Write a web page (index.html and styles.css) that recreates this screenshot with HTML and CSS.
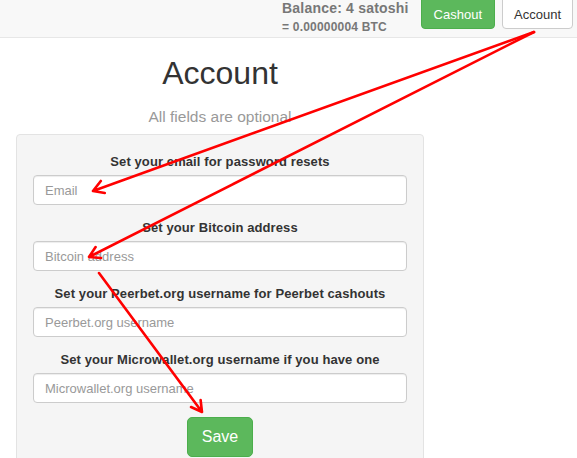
FILE: index.html
```html
<!DOCTYPE html>
<html>
<head>
<meta charset="utf-8">
<link rel="stylesheet" href="styles.css">
</head>
<body>
<header class="navbar">
  <div class="balance">
    <div class="balance-main">Balance: 4 satoshi</div>
    <div class="balance-btc">= 0.00000004 BTC</div>
  </div>
  <button class="nav-btn btn-green">Cashout</button>
  <button class="nav-btn btn-white">Account</button>
</header>
<main class="content">
  <h1 class="title">Account</h1>
  <p class="subtitle">All fields are optional</p>
  <form class="well">
    <div class="group">
      <label class="label">Set your email for password resets</label>
      <input class="field" type="text" placeholder="Email">
    </div>
    <div class="group">
      <label class="label">Set your Bitcoin address</label>
      <input class="field" type="text" placeholder="Bitcoin address">
    </div>
    <div class="group">
      <label class="label">Set your Peerbet.org username for Peerbet cashouts</label>
      <input class="field" type="text" placeholder="Peerbet.org username">
    </div>
    <div class="group">
      <label class="label">Set your Microwallet.org username if you have one</label>
      <input class="field" type="text" placeholder="Microwallet.org username">
    </div>
    <div class="actions">
      <button class="save" type="button">Save</button>
    </div>
  </form>
</main>
<svg class="arrows" width="577" height="458" viewBox="0 0 577 458">
  <g fill="none" stroke="#ff0000" stroke-width="2.6" stroke-linecap="round" stroke-linejoin="round">
    <path d="M534 32 L93 191 M104.8 193 L93 191 L100.8 181"/>
    <path d="M534 32 L89 257 M101 258 L89 257 L95.6 247"/>
    <path d="M99 273 L202 412 M200.6 400 L202 412 L191 407"/>
  </g>
</svg>
</body>
</html>
```

FILE: styles.css
```css
html, body {
  margin: 0;
  padding: 0;
  background: #fff;
  font-family: "Liberation Sans", Arial, sans-serif;
  color: #333;
}

body {
  position: relative;
  width: 577px;
  height: 458px;
  overflow: hidden;
}

.navbar {
  height: 37px;
  background: #f8f8f8;
  border-bottom: 1px solid #e7e7e7;
  display: flex;
  justify-content: flex-end;
  align-items: flex-start;
  padding-right: 4px;
}

.balance {
  color: #777;
  font-weight: bold;
  margin-right: 12px;
  letter-spacing: 0.2px;
}

.balance-main {
  font-size: 14px;
  line-height: 16px;
}

.balance-btc {
  font-size: 12px;
  line-height: 16px;
  margin-top: 3px;
}

.nav-btn {
  font-family: "Liberation Sans", Arial, sans-serif;
  font-size: 13px;
  height: 33px;
  margin-top: -4px;
  padding: 4px 12px 0;
  border-radius: 4px;
  border: 1px solid;
  line-height: 16px;
}

.btn-green {
  background: #5cb85c;
  border-color: #4cae4c;
  color: #fff;
  margin-right: 7px;
}

.btn-white {
  background: #fff;
  border-color: #ccc;
  color: #333;
  padding: 4px 11px 0;
}

.content {
  width: 408px;
  padding-left: 16px;
}

.title {
  margin: 18px 0 0;
  font-size: 32px;
  font-weight: normal;
  line-height: 35px;
  text-align: center;
  color: #333;
}

.subtitle {
  margin: 16px 0 0;
  font-size: 15.5px;
  line-height: 20px;
  text-align: center;
  color: #999;
}

.well {
  margin-top: 7px;
  background: #f5f5f5;
  border: 1px solid #e3e3e3;
  border-radius: 4px;
  padding: 18px 16px 20px;
}

.group {
  margin-bottom: 14px;
}

.label {
  display: block;
  text-align: center;
  font-weight: bold;
  font-size: 13px;
  line-height: 18px;
  margin-bottom: 4px;
  color: #333;
  letter-spacing: 0.1px;
}

.field {
  display: block;
  box-sizing: border-box;
  width: 100%;
  height: 30px;
  border: 1px solid #ccc;
  border-radius: 4px;
  background: #fff;
  padding: 0 11px;
  font-family: "Liberation Sans", Arial, sans-serif;
  font-size: 13px;
  color: #555;
  box-shadow: inset 0 1px 1px rgba(0,0,0,0.075);
}

.field::placeholder {
  color: #999;
}

.actions {
  display: flex;
  justify-content: center;
}

.save {
  width: 66px;
  height: 40px;
  background: #5cb85c;
  border: 1px solid #4cae4c;
  border-radius: 5px;
  color: #fff;
  font-family: "Liberation Sans", Arial, sans-serif;
  font-size: 16px;
  padding: 0;
}

.arrows {
  position: absolute;
  top: 0;
  left: 0;
  pointer-events: none;
}
```
